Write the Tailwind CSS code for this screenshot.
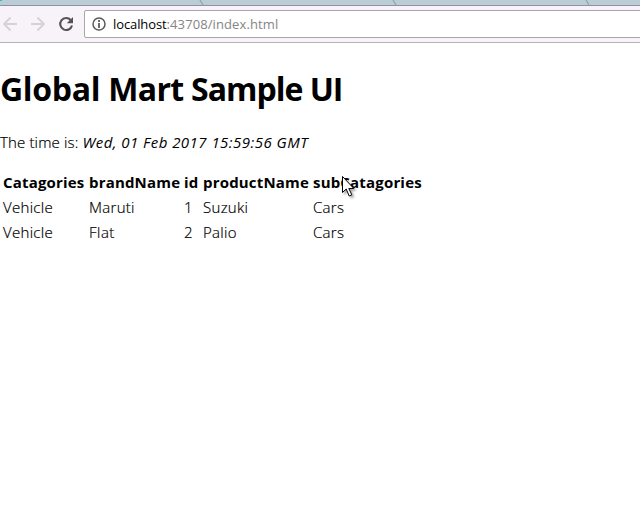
<!DOCTYPE html>
<html lang="en"><head><meta charset="utf-8"><title>Global Mart Sample UI</title>
<script src="https://cdn.jsdelivr.net/npm/@tailwindcss/browser@4"></script></head>
<body class="relative h-[514px] w-[640px] overflow-hidden bg-white font-['Open_Sans','Noto_Sans',sans-serif] text-black">
<header class="h-[43px] border-b border-[#b8b2b8] bg-[#f7f3f8]">
<svg class="block h-[6px] w-[640px]" viewBox="0 0 640 6"><path fill="#bacdd5" d="M0 0h640v6H0z"/><path d="M0 .5h2" stroke="#3ab5bf"/><path d="M200 0l3 5M393 0l3 5M586 0l3 5" stroke="#8aa9b1" stroke-width="1.3"/><path d="M0 5.5h640" stroke="#928fa8"/></svg>
<div class="flex h-9 items-start pt-1">
<svg class="h-7 w-[84px] shrink-0" viewBox="0 0 84 28" fill="none"><g stroke="#d5d1d7" stroke-width="1.8"><path d="M17 14H4M10.500 7.500L4 14l6.500 6.500M31 14h13M37.500 7.500L44 14l-6.500 6.500"/></g><path d="M70.700 10A6 6 0 1 0 72 15.500" stroke="#555257" stroke-width="2.100"/><path d="M73 7v6.200h-6.200z" fill="#555257"/></svg>
<div class="flex h-7 w-[570px] shrink-0 items-center rounded-[2px] border border-[#a9a5aa] bg-white pl-[7px]">
<svg class="mr-[7px] h-[14px] w-[14px]" viewBox="0 0 14 14"><circle cx="7" cy="7" r="6" fill="none" stroke="#5b5b5b" stroke-width="1.500"/><path d="M7 3v2M7 6v5" stroke="#5b5b5b" stroke-width="1.800"/></svg>
<span class="whitespace-pre text-[13px] leading-[18px]"><span class="tracking-[-0.1px]">localhost</span><span class="tracking-[0.1px] text-[#858585]">:43708/index.html</span></span>
</div></div></header>
<main>
<h1 class="mt-[24px] h-[44px] whitespace-pre text-[32px] leading-[44px] font-bold tracking-[-0.7px]"><span class="tracking-[-0.3px]">Global </span>Mart <span class="tracking-[-1px]">Sample UI</span></h1>
<p class="mt-[19px] h-6 whitespace-pre text-[15px] leading-6 font-light"><span class="tracking-[0.15px] [-webkit-text-stroke:0.2px_#000]">The time is: </span><em class="font-normal tracking-[0.46px]">Wed, 01 Feb 2017 15:59:56 GMT</em></p>
<table class="mt-[16px] ml-[3px] table-fixed border-collapse text-left text-[15px] leading-[25px] whitespace-pre">
<colgroup><col class="w-[86px]"><col class="w-[94px]"><col class="w-[20px]"><col class="w-[110px]"><col class="w-[130px]"></colgroup>
<thead class="tracking-[0.18px]"><tr class="h-[25px]"><th class="p-0">Catagories</th><th class="p-0">brandName</th><th class="p-0 pl-px">id</th><th class="p-0">productName</th><th class="p-0">subCatagories</th></tr></thead>
<tbody class="font-light tracking-[0.3px] [-webkit-text-stroke:0.2px_#000]"><tr class="h-[25px]"><td class="p-0">Vehicle</td><td class="p-0">Maruti</td><td class="p-0 pl-px">1</td><td class="p-0">Suzuki</td><td class="p-0">Cars</td></tr>
<tr class="h-[25px]"><td class="p-0">Vehicle</td><td class="p-0">FIat</td><td class="p-0 pl-px">2</td><td class="p-0">Palio</td><td class="p-0">Cars</td></tr></tbody></table>
</main>
<svg class="absolute top-[175px] left-[341px] h-[24px] w-[17px] drop-shadow-[2px_2px_1px_#0005]" viewBox="0 0 17 24"><path d="M1.500 1.500v16l3.700-3.500 3 7 2.600-1.200-3-6.300h5z" fill="#fff" stroke="#000"/></svg>
</body></html>
